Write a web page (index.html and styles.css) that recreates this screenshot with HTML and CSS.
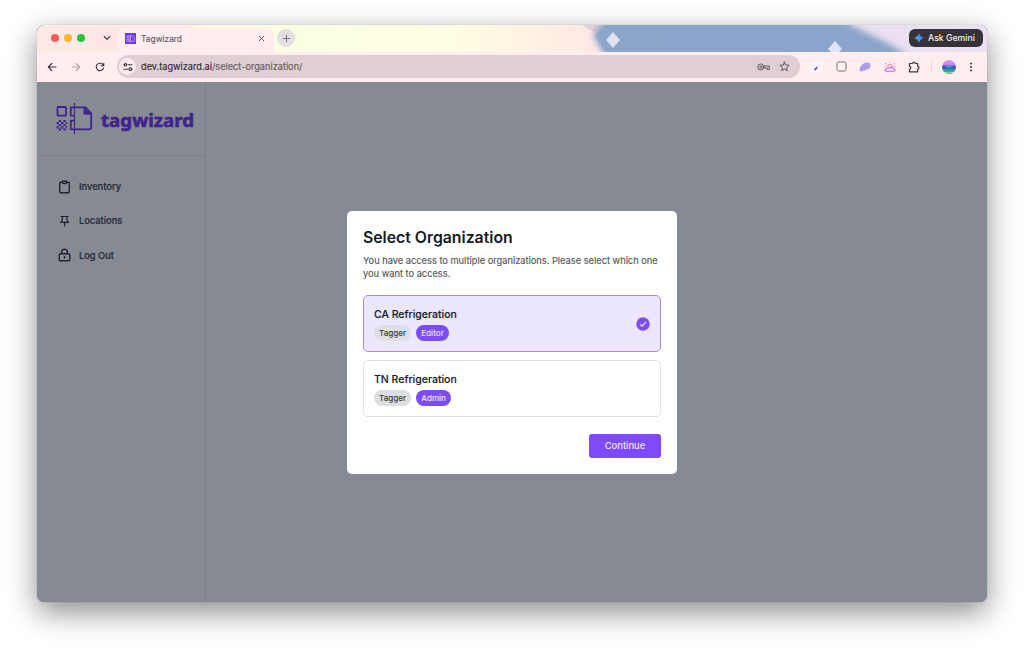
FILE: index.html
```
<!DOCTYPE html>
<html lang="en">
<head>
<meta charset="utf-8">
<title>Tagwizard</title>
<link rel="stylesheet" href="styles.css">
</head>
<body>
<div class="window">
  <header class="tabstrip">
    <svg class="theme-art" width="950" height="27" viewBox="0 0 950 27" aria-hidden="true">
      <defs>
        <linearGradient id="sky" x1="0" x2="1"><stop offset="0" stop-color="#ffe9e7"/><stop offset=".16" stop-color="#ffe9e4"/><stop offset=".17" stop-color="#fffddf"/><stop offset=".28" stop-color="#fbffe2"/><stop offset=".43" stop-color="#fffee2"/><stop offset=".51" stop-color="#fff3e3"/><stop offset=".59" stop-color="#ffe7e5"/></linearGradient>
        <filter id="soft" x="-20%" y="-80%" width="140%" height="260%"><feGaussianBlur stdDeviation="3"/></filter>
      </defs>
      <rect width="950" height="27" fill="url(#sky)"/>
      <path d="M545 0h20l-7 8z" fill="#d8bec8" opacity=".6"/>
      <path d="M556 10L567 -6H960V36H570z" fill="#8ba4cb" filter="url(#soft)"/>
      <path d="M567 0h60v27h-58l-11-16z" fill="#8ba4cb" opacity=".55"/>
      <path d="M808 -10H970V40H882C862 21 835 11 812 -1z" fill="#eae0f1" filter="url(#soft)"/>
      <path d="M576 7l7 8-7 8-7-8z" fill="#dfe0f3"/>
      <path d="M798 16l7 8-3 3h-8l-3-3z" fill="#dfe5fb"/>
    </svg>
    <div class="lights"><i class="red"></i><i class="amber"></i><i class="green"></i></div>
    <div class="tab-search"><svg width="8" height="6" viewBox="0 0 8 6"><path d="M1.200 1.500L4 4.300l2.800-2.800" class="line dark"/></svg></div>
    <div class="tab">
      <svg width="11" height="11" viewBox="0 0 11 11"><rect width="11" height="11" fill="#7138e0"/><path d="M1.800 2.800h2v2h-2zM1.800 6.300h2v2h-2zM5.200 2.800h2.400l1.600 1.600v3.900h-4zM5.200 1.500v8" fill="none" stroke="#d0b8ff" stroke-width=".7"/></svg>
      <span class="tab-title">Tagwizard</span>
      <svg width="7" height="7" viewBox="0 0 7 7"><path d="M1.200 1.200l4.600 4.600M5.800 1.200L1.200 5.800" class="line mid"/></svg>
    </div>
    <div class="new-tab"><svg width="9" height="9" viewBox="0 0 9 9"><path d="M4.500 1.200v6.600M1.200 4.500h6.600" class="line plus"/></svg></div>
    <div class="gemini">
      <svg width="10" height="10" viewBox="0 0 10 10"><defs><linearGradient id="gem" x1="0" y1=".8" x2="1" y2=".3"><stop offset="0" stop-color="#62bd73"/><stop offset=".4" stop-color="#4a9cf2"/><stop offset=".75" stop-color="#4283ee"/><stop offset="1" stop-color="#ea6264"/></linearGradient></defs><path d="M5 0Q6 4 10 5Q6 6 5 10Q4 6 0 5Q4 4 5 0z" fill="url(#gem)"/></svg>
      <span>Ask Gemini</span>
    </div>
  </header>
  <div class="toolbar">
    <div class="nav">
      <svg width="10" height="10" viewBox="0 0 10 10"><path d="M9 5H1.500M4.800 1.500L1.300 5l3.500 3.500" class="line dark"/></svg>
      <svg width="10" height="10" viewBox="0 0 10 10"><path d="M1 5h7.500M5.200 1.500L8.700 5 5.200 8.500" class="line muted"/></svg>
      <svg width="10" height="10" viewBox="0 0 10 10"><path d="M8.500 6A3.700 3.700 0 1 1 7.700 2.400L8.700 3.500M8.800 1v2.700H6.100" class="line dark"/></svg>
    </div>
    <div class="address">
      <span class="site-info"><svg width="10" height="10" viewBox="0 0 10 10"><path d="M.8 2.800h.4M5 2.800h4M1 7.200h4M8.800 7.200h.4" class="line dark"/><circle cx="2.500" cy="2.800" r="1.200" class="line dark"/><circle cx="7.300" cy="7.200" r="1.300" class="line dark"/></svg></span>
      <span class="url"><b>dev.tagwizard.ai</b>/select-organization/</span>
      <svg class="key" width="13" height="8" viewBox="0 0 13 8"><circle cx="3.700" cy="4" r="3" class="line mid"/><circle cx="3.700" cy="4" r="1" class="line mid"/><path d="M6.500 3h5.700v3.500h-2V5H6.500" class="line mid"/></svg>
      <svg width="11" height="11" viewBox="0 0 11 11"><path d="M5.500 1l1.300 3 3.300.3-2.500 2.200.8 3.200-2.900-1.700-2.900 1.700.8-3.200L.9 4.300 4.200 4z" class="line mid"/></svg>
    </div>
    <div class="extensions">
      <svg width="12" height="12" viewBox="0 0 12 12"><rect width="12" height="12" rx="2" fill="#fff4f6"/><path d="M3.500 9l2.800-2.700" stroke="#3b46c9" stroke-width="1.700"/><path d="M6.500 6l2.500-3" stroke="#dde6fa" stroke-width="1.200"/></svg>
      <svg width="11" height="11" viewBox="0 0 11 11"><rect x="1" y="1" width="9" height="9" rx="1.700" fill="#fff5f4" stroke="#777176" stroke-width="1"/></svg>
      <svg width="12" height="12" viewBox="0 0 12 12"><path d="M.8 10C.2 6 3.500 1.500 8 1.500c3 0 4 2 3.200 4.500C10.600 8 8.700 9 7.200 8.600L5.800 10l-1.600-.6-1 1.100z" fill="#aca0ee"/><path d="M4 7.500l4-3" stroke="#9183d7" stroke-width=".7"/></svg>
      <svg width="12" height="12" viewBox="0 0 12 12" fill="none" stroke-width="1.100" stroke-linecap="round"><path d="M2 10.200h8c1.300-.3 1.200-2.200-.1-2.400-.4-1.200-1.600-1.500-2.400-.8-.8-1.100-2.300-1.100-3 .2C3 6.800 2.200 7.400 2 8.100.7 8.500.9 10 2 10.200z" stroke="#bd69e9"/><path d="M3.500 5.200a2.700 2.700 0 0 1 5 0M6 1v.3M1.500 2.500l.5.500M10.500 2.500l-.5.500M.8 5.500h.3M10.900 5.500h.3" stroke="#f183aa"/></svg>
      <svg width="12" height="12" viewBox="0 0 12 12"><path d="M1.500 2.500h3.200c0-2 2.500-2 2.500 0h2.500v3c1.800 0 1.800 2.400 0 2.400v2.900H1.500V8.200c1.700 0 1.700-2.800 0-2.800z" fill="none" stroke="#3f383d" stroke-width="1.200" stroke-linejoin="round"/></svg>
      <span class="divider"></span>
      <svg width="14" height="14" viewBox="0 0 14 14"><defs><clipPath id="face"><circle cx="7" cy="7" r="7"/></clipPath><linearGradient id="dusk" x1="0" y1="0" x2="0" y2="1"><stop offset="0" stop-color="#d89af0"/><stop offset=".32" stop-color="#c48ce6"/><stop offset=".45" stop-color="#4c5dc4"/><stop offset=".58" stop-color="#2450b8"/><stop offset=".7" stop-color="#2f9fc4"/><stop offset=".8" stop-color="#3c9853"/><stop offset=".88" stop-color="#a5d89d"/><stop offset="1" stop-color="#3c9853"/></linearGradient></defs><g clip-path="url(#face)"><rect width="14" height="14" fill="url(#dusk)"/><path d="M3 7.500l4-2 4 2z" fill="#3bb3d8"/></g></svg>
      <svg width="4" height="10" viewBox="0 0 4 10"><g fill="#3f383d"><circle cx="2" cy="1.500" r="1"/><circle cx="2" cy="5" r="1"/><circle cx="2" cy="8.500" r="1"/></g></svg>
    </div>
  </div>
  <main class="page">
    <aside class="sidebar">
      <div class="brand">
        <svg width="140" height="34" viewBox="0 0 140 34">
          <g fill="none" stroke="#3f248e" stroke-width="1.800" stroke-linejoin="round">
            <rect x="1.500" y="5" width="8.500" height="8.700" rx=".8"/>
            <path d="M19 5.300h-4.200v8.400H19M19 18.700h-4.200v8.600H19"/>
            <path d="M18.500 5.300h11l5.700 6v14q0 2-2 2H18.500M29 5.500v5.800h6"/>
            <path d="M18.500 1v31" stroke-width="1.100"/>
          </g>
          <path d="M27.500 5v7.500H35z" fill="#3f248e"/>
          <path d="M2.800 18h2.300v2.100H2.800zM7.400 18h2.300v2.100H7.400zM.7 20.100h2.100v2.100H.7zM5.100 20.100h2.300v2.100H5.100zM9.700 20.100h1.500v2.100H9.700zM2.800 22.200h2.300v2.100H2.800zM7.400 22.200h2.300v2.100H7.400zM.7 24.300h2.100v2.100H.7zM5.100 24.300h2.300v2.100H5.100zM9.700 24.300h1.500v2.100H9.700zM2.800 26.400h2.300v2H2.800zM7.400 26.400h2.300v2H7.400z" fill="#3f248e"/>
          <text x="45" y="25" textLength="93" lengthAdjust="spacingAndGlyphs" class="wordmark">tagwizard</text>
        </svg>
      </div>
      <nav class="menu">
        <a><svg width="13" height="14" viewBox="0 0 13 14"><path d="M4 2.200H2.700q-1 0-1 1v8.600q0 1 1 1h7.600q1 0 1-1V3.200q0-1-1-1H9M4.200 1.200h4.600v1q0 1.300-1.300 1.300h-2q-1.300 0-1.300-1.300z" class="line ink"/></svg>Inventory</a>
        <a><svg width="13" height="14" viewBox="0 0 13 14"><path d="M3 2.500h7.200M4.300 2.500v3.600L2.700 8.300h7.800L8.900 6.100V2.500M6.600 8.300v3.600" class="line pin"/></svg>Locations</a>
        <a><svg width="13" height="14" viewBox="0 0 13 14"><path d="M3.700 5.700V4a2.800 2.800 0 0 1 5.600 0v1.700M2.500 5.700h8q1.300 0 1.300 1.300v4.500q0 1.300-1.300 1.300h-8q-1.300 0-1.300-1.300V7q0-1.300 1.300-1.300zM6.500 8.500v1.600" class="line ink"/></svg>Log Out</a>
      </nav>
    </aside>
    <section class="stage">
      <div class="dialog">
        <h1>Select Organization</h1>
        <p class="lead">You have access to multiple organizations. Please select which one<br>you want to access.</p>
        <div class="org selected">
          <div><h2>CA Refrigeration</h2><div class="roles"><span class="role">Tagger</span><span class="role strong">Editor</span></div></div>
          <svg width="14" height="14" viewBox="0 0 14 14"><circle cx="7" cy="7" r="6.700" fill="#7c4cf4"/><path d="M4 7.200l2 2L10 5" fill="none" stroke="#eee8ff" stroke-width="1.100"/></svg>
        </div>
        <div class="org">
          <div><h2>TN Refrigeration</h2><div class="roles"><span class="role">Tagger</span><span class="role strong">Admin</span></div></div>
        </div>
        <button class="continue">Continue</button>
      </div>
    </section>
  </main>
</div>
</body>
</html>
```
FILE: styles.css
```
* { box-sizing: border-box; }
body { margin: 0; padding: 25px 37px; width: 1024px; height: 651px; overflow: hidden; background: #fff; font-family: Inter, "Liberation Sans", sans-serif; }
svg { display: block; flex: none; }
.window { width: 950px; height: 577px; border-radius: 7px; overflow: hidden; display: flex; flex-direction: column; background: #868a92; box-shadow: 0 0 1px rgba(0,0,0,.4), 0 10px 30px rgba(0,0,0,.46); }
.line { fill: none; stroke-width: 1.1; stroke-linecap: round; stroke-linejoin: round; }
.dark { stroke: #40373d; }
.muted { stroke: #b5a5a9; }
.mid { stroke: #62575f; stroke-width: 1; }
.plus { stroke: #777184; stroke-width: 1; }
.ink { stroke: #202532; stroke-width: 1.4; }
.pin { stroke: #202532; stroke-width: 1.2; }

.tabstrip { position: relative; height: 27px; padding-bottom: 1px; display: flex; align-items: center; }
.tabstrip > * { position: relative; }
.tabstrip > .theme-art { position: absolute; inset: 0; }
.lights { display: flex; gap: 5px; margin-left: 14px; }
.lights i { width: 8px; height: 8px; border-radius: 50%; }
.red { background: #fa5b59; }
.amber { background: #fdb72c; }
.green { background: #2ac040; }
.tab-search { width: 22px; height: 20px; margin-left: 11px; border-radius: 6px; background: #ffe5e6; display: flex; align-items: center; justify-content: center; }
.tab { width: 156px; height: 24px; align-self: flex-end; margin-bottom: -1px; padding: 0 9px 3px 7px; border-radius: 7px 7px 0 0; background: #ffedef; display: flex; align-items: center; }
.tab-title { flex: 1; margin-left: 5px; font-size: 8.4px; color: #665b65; -webkit-text-stroke: .15px; }
.new-tab { width: 18px; height: 18px; margin-left: 3px; border-radius: 50%; background: #e4dfe3; display: flex; align-items: center; justify-content: center; }
.gemini { width: 74px; height: 18px; margin-left: auto; margin-right: 4px; border-radius: 6px; background: #353337; color: #f4f1f4; display: flex; align-items: center; gap: 4px; padding-left: 5px; font-size: 8.7px; font-weight: 500; white-space: nowrap; }

.toolbar { height: 30px; flex: none; padding-bottom: 1px; background: #ffedef; display: flex; align-items: center; }
.nav { display: flex; gap: 14px; margin-left: 10px; width: 70px; }
.address { width: 683px; height: 23px; border-radius: 12px; background: #dfced4; display: flex; align-items: center; padding: 0 10px 0 2px; }
.site-info { width: 17px; height: 17px; border-radius: 50%; background: #fbe9ed; display: flex; align-items: center; justify-content: center; }
.url { flex: 1; margin-left: 5px; font-size: 9.2px; color: #665b62; -webkit-text-stroke: .15px; }
.url b { font-weight: 400; color: #302a2f; }
.key { margin-right: 9px; }
.extensions { flex: 1; display: flex; align-items: center; gap: 12.500px; padding-left: 11px; }
.divider { width: 1px; height: 10px; margin: 0 -2px; background: #eed5db; }

.page { flex: 1; display: flex; }
.sidebar { width: 169px; border-right: 1px solid #7b7e87; }
.brand { height: 74px; padding: 20px 0 0 19px; border-bottom: 1px solid #7d8089; }
.wordmark { font-family: "Noto Sans", sans-serif; font-weight: 700; font-size: 18px; fill: #3f248e; stroke: #3f248e; stroke-width: .6; stroke-linejoin: round; }
.menu { padding: 21px 0 0 21px; display: flex; flex-direction: column; gap: 14.4px; }
.menu a { display: flex; align-items: center; gap: 8px; height: 20px; padding-bottom: 1px; font-size: 9.3px; font-weight: 500; color: #242936; -webkit-text-stroke: .15px; }

.stage { flex: 1; padding: 129px 0 0 141px; }
.dialog { width: 330px; height: 262.5px; padding: 16px; border-radius: 5px; background: #fff; display: flex; flex-direction: column; }
h1 { margin: 0; font-size: 15.8px; line-height: 21px; font-weight: 600; color: #151923; white-space: nowrap; }
.lead { margin: 6px 0 0; font-size: 9.3px; line-height: 13px; color: #50545b; white-space: nowrap; letter-spacing: -.015px; -webkit-text-stroke: .12px; }
.org { height: 57px; flex: none; margin-top: 8px; padding: 0 10px; border: 1px solid #dfdfe2; border-radius: 5px; display: flex; align-items: center; justify-content: space-between; }
.selected { margin-top: 15px; background: #ece6fe; border-color: #a78adf; }
h2 { margin: 1px 0 0; font-size: 10.5px; line-height: 14px; font-weight: 500; color: #1b1c2a; -webkit-text-stroke: .15px; }
.roles { display: flex; gap: 5px; margin-top: 3px; }
.role { height: 16px; line-height: 16px; padding: 0 5px; border-radius: 8px; background: #dddedf; font-size: 8.1px; font-weight: 500; color: #35383a; }
.selected .role { background: #e0dfe5; }
.role.strong { background: #7c4cf8; color: #eee7ff; }
.continue { width: 72px; height: 24.5px; margin: 16.5px 0 0; padding: 0; align-self: flex-end; border: 0; border-radius: 3px; background: #7d4aff; color: #efe9ff; font-family: inherit; font-size: 9.4px; font-weight: 500; }
```
